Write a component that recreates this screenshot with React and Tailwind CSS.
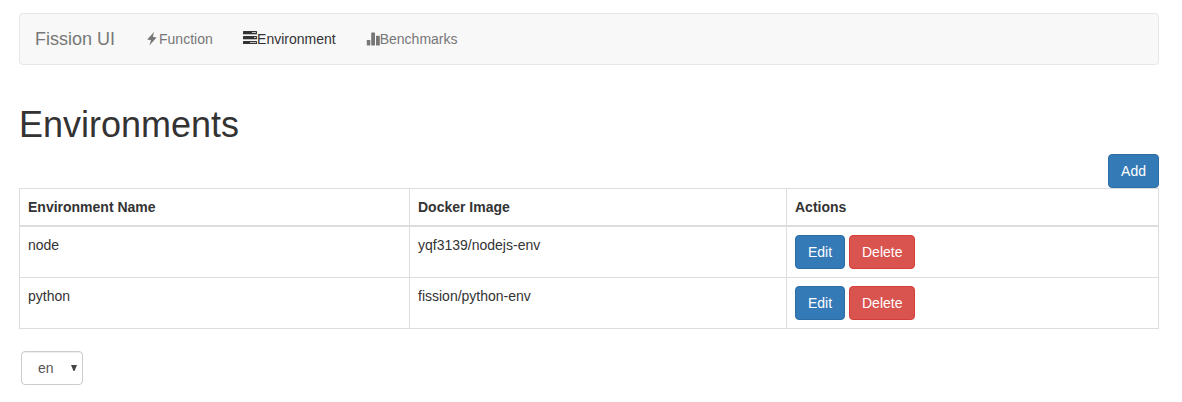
const rows = [
  { name: 'node', image: 'yqf3139/nodejs-env' },
  { name: 'python', image: 'fission/python-env' },
];

const btn = 'h-[34px] rounded-[4px] border py-[6px] leading-5 text-white';
const blue = 'border-[#2e6da4] bg-[#337ab7]';
const red = 'border-[#d43f3a] bg-[#d9534f]';
const cell = 'border border-[#dddddd] p-2 text-left align-top';

function Bolt() {
  return (
    <svg width="14" height="14" viewBox="0 0 14 14" className="fill-current">
      <path d="M9.2 -0.2 L2.2 7.4 L6 8.2 L4.4 13.6 L11.6 5.5 L7.8 4.700 Z" />
    </svg>
  );
}

function Tasks() {
  return (
    <svg width="14" height="14" viewBox="0 0 14 14" className="mb-[2px] overflow-visible fill-current">
      <rect x="0" y="0" width="14" height="3.100" rx=".6" />
      <rect x="0" y="5" width="14" height="3.100" rx=".6" />
      <rect x="0" y="10" width="14" height="3.100" rx=".6" />
      <g className="fill-[#c4c4c4]">
        <rect x="9" y="1" width="4" height="1" />
        <rect x="11" y="6" width="2" height="1" />
        <rect x="7" y="11" width="6" height="1" />
      </g>
      <path className="fill-[#333333]/30" d="M0 3.100H14V4H0ZM0 8.100H14V9H0Z" />
    </svg>
  );
}

function Stats() {
  return (
    <svg width="14" height="14" viewBox="0 0 14 14" className="mb-[1px] fill-current">
      <rect x="0.800" y="8" width="3.500" height="5.500" rx=".4" />
      <rect x="5.200" y="0.500" width="3.800" height="13" rx=".4" />
      <rect x="10" y="3.700" width="3.800" height="9.800" rx=".4" />
    </svg>
  );
}

export default function App() {
  return (
    <div className="h-[402px] bg-white pt-[13px] pr-[23px] pl-[19px] font-['Liberation_Sans',Arial,sans-serif] text-[14px] leading-5 text-[#333333]">
      <nav className="flex h-[52px] items-center rounded-[4px] border border-[#e7e7e7] bg-[#f8f8f8] text-[#777777]">
        <span className="px-[15px] text-[18px]">Fission UI</span>
        <a className="flex items-center px-[15px]"><Bolt />Function</a>
        <a className="flex items-center pr-[15px] pl-[15.400px] text-[#333333]"><Tasks />Environment</a>
        <a className="flex items-center px-[15px]"><Stats />Benchmarks</a>
      </nav>
      <h1 className="mt-10 text-[36px] leading-[39px] font-medium">Environments</h1>
      <div className="mt-[10px] flex justify-end">
        <button className={`${btn} ${blue} px-3`}>Add</button>
      </div>
      <table className="w-[1140px] table-fixed border-collapse">
        <colgroup>
          <col className="w-[390px]" />
          <col className="w-[377px]" />
          <col />
        </colgroup>
        <thead>
          <tr>
            {['Environment Name', 'Docker Image', 'Actions'].map((h) => (
              <th key={h} className={`${cell} border-b-2 font-bold`}>{h}</th>
            ))}
          </tr>
        </thead>
        <tbody>
          {rows.map((r) => (
            <tr key={r.name}>
              <td className={cell}>{r.name}</td>
              <td className={cell}>{r.image}</td>
              <td className={cell}>
                <div className="flex gap-1">
                  <button className={`${btn} ${blue} w-[50px] text-center`}>Edit</button>
                  <button className={`${btn} ${red} w-[66px] pl-3 text-left`}>Delete</button>
                </div>
              </td>
            </tr>
          ))}
        </tbody>
      </table>
      <div className="mt-[22px] ml-[2px] flex h-[34px] w-[62px] items-center justify-between rounded-[4px] border border-[#cccccc] bg-white pr-[5px] pl-4 text-[#555555] shadow-[inset_0_1px_1px_rgba(0,0,0,0.075)]">
        <span>en</span>
        <svg width="6" height="6" viewBox="0 0 6 6" className="fill-[#444444]"><path d="M0 0H6L3.500 6H2.500Z" /></svg>
      </div>
    </div>
  );
}
